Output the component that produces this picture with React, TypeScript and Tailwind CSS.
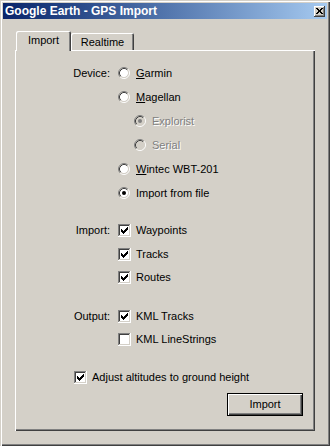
import React from "react";

// classic win2k-ish sunken radio
function Radio({ checked = false, disabled = false }: { checked?: boolean; disabled?: boolean }) {
  return (
    <svg width="12" height="12" viewBox="0 0 12 12" className="shrink-0">
      <circle cx="6" cy="6" r="4.2" fill={disabled ? "#d4d0c8" : "#ffffff"} />
      <path d="M2.11 9.89 A5.5 5.5 0 0 1 9.89 2.11" fill="none" stroke="#808080" strokeWidth="1" />
      <path d="M9.89 2.11 A5.5 5.5 0 0 1 2.11 9.89" fill="none" stroke="#ffffff" strokeWidth="1" />
      <path d="M2.82 9.18 A4.5 4.5 0 0 1 9.18 2.82" fill="none" stroke="#404040" strokeWidth="1" />
      <path d="M9.18 2.82 A4.5 4.5 0 0 1 2.82 9.18" fill="none" stroke="#d4d0c8" strokeWidth="1" />
      {checked && <circle cx="6" cy="6" r="2" fill={disabled ? "#808080" : "#000000"} />}
    </svg>
  );
}

function Checkbox({ checked = false }: { checked?: boolean }) {
  const cols = [
    [3, 5],
    [4, 6],
    [5, 7],
    [6, 6],
    [7, 5],
    [8, 4],
    [9, 3],
  ];
  return (
    <svg width="13" height="13" viewBox="0 0 13 13" shapeRendering="crispEdges" className="shrink-0">
      <rect x="0" y="0" width="13" height="13" fill="#ffffff" />
      <rect x="0" y="0" width="12" height="1" fill="#808080" />
      <rect x="0" y="0" width="1" height="12" fill="#808080" />
      <rect x="1" y="1" width="10" height="1" fill="#404040" />
      <rect x="1" y="1" width="1" height="10" fill="#404040" />
      <rect x="1" y="11" width="11" height="1" fill="#d4d0c8" />
      <rect x="11" y="1" width="1" height="11" fill="#d4d0c8" />
      {checked && cols.map(([x, y]) => <rect key={x} x={x} y={y} width="1" height="3" fill="#000000" />)}
    </svg>
  );
}

function Label({ children }: { children?: React.ReactNode }) {
  return <div className="w-[95px] text-right shrink-0">{children}</div>;
}

export default function App() {
  const disabledText = "text-[#808080] [text-shadow:1px_1px_0_#ffffff]";

  return (
    <div
      className="w-[330px] h-[446px] bg-[#d4d0c8] p-[3px] flex flex-col text-black text-[11px] leading-none shadow-[inset_1px_1px_0_#d4d0c8,inset_2px_2px_0_#ffffff,inset_-1px_-1px_0_#404040,inset_-2px_-2px_0_#808080]"
      style={{ fontFamily: '"Liberation Sans", Arial, sans-serif' }}
    >
      {/* title bar */}
      <div className="h-[16px] shrink-0 flex items-center justify-between bg-gradient-to-r from-[#0a246a] to-[#a6caf0] pl-[2px] pr-[2px]">
        <span className="text-white font-bold text-[12px] leading-none">Google Earth - GPS Import</span>
        <div className="w-[11px] h-[11px] bg-[#d4d0c8] flex items-center justify-center shadow-[inset_-1px_-1px_0_#404040,inset_1px_1px_0_#ffffff,inset_-2px_-2px_0_#808080]">
          <svg width="7" height="6" viewBox="0 0 7 6" shapeRendering="crispEdges">
            <path d="M0.5 0 L6.5 6 M6.5 0 L0.5 6" stroke="#000" strokeWidth="1.2" />
          </svg>
        </div>
      </div>

      {/* tabs */}
      <div className="mt-[12px] ml-[13px] flex items-end h-[20px]">
        <div className="relative z-[2] w-[55px] h-[20px] bg-[#d4d0c8] rounded-tl-[2px] rounded-tr-[2px] flex items-center justify-center pb-[1px] shadow-[inset_1px_1px_0_#ffffff,inset_-1px_0_0_#404040,inset_-2px_0_0_#808080]">
          Import
        </div>
        <div className="w-[63px] h-[18px] bg-[#d4d0c8] rounded-tl-[2px] rounded-tr-[2px] flex items-center justify-center pt-[1px] shadow-[inset_1px_1px_0_#ffffff,inset_-1px_0_0_#404040,inset_-2px_0_0_#808080]">
          Realtime
        </div>
      </div>

      {/* panel */}
      <div className="relative z-[1] mt-[-1px] ml-[12px] w-[300px] h-[381px] bg-[#d4d0c8] pt-[11px] flex flex-col shadow-[inset_1px_1px_0_#ffffff,inset_-1px_-1px_0_#404040,inset_-2px_-2px_0_#808080]">
        <div className="flex items-center h-[24px]">
          <Label>Device:</Label>
          <div className="ml-[8px] flex items-center gap-[6px]">
            <Radio />
            <span>
              <u className="[text-underline-offset:1px]">G</u>armin
            </span>
          </div>
        </div>
        <div className="flex items-center h-[24px]">
          <Label />
          <div className="ml-[8px] flex items-center gap-[6px]">
            <Radio />
            <span>
              <u className="[text-underline-offset:1px]">M</u>agellan
            </span>
          </div>
        </div>
        <div className="flex items-center h-[24px]">
          <Label />
          <div className="ml-[24px] flex items-center gap-[6px]">
            <Radio checked disabled />
            <span className={disabledText}>Explorist</span>
          </div>
        </div>
        <div className="flex items-center h-[24px]">
          <Label />
          <div className="ml-[24px] flex items-center gap-[6px]">
            <Radio disabled />
            <span className={disabledText}>Serial</span>
          </div>
        </div>
        <div className="flex items-center h-[24px]">
          <Label />
          <div className="ml-[8px] flex items-center gap-[6px]">
            <Radio />
            <span>
              <u className="[text-underline-offset:1px]">W</u>intec WBT-201
            </span>
          </div>
        </div>
        <div className="flex items-center h-[24px]">
          <Label />
          <div className="ml-[8px] flex items-center gap-[6px]">
            <Radio checked />
            <span>Import from file</span>
          </div>
        </div>

        <div className="mt-[14px] flex items-center h-[23.5px]">
          <Label>Import:</Label>
          <div className="ml-[8px] flex items-center gap-[5px]">
            <Checkbox checked />
            <span>Waypoints</span>
          </div>
        </div>
        <div className="flex items-center h-[23.5px]">
          <Label />
          <div className="ml-[8px] flex items-center gap-[5px]">
            <Checkbox checked />
            <span>Tracks</span>
          </div>
        </div>
        <div className="flex items-center h-[23.5px]">
          <Label />
          <div className="ml-[8px] flex items-center gap-[5px]">
            <Checkbox checked />
            <span>Routes</span>
          </div>
        </div>

        <div className="mt-[15px] flex items-center h-[23.5px]">
          <Label>Output:</Label>
          <div className="ml-[8px] flex items-center gap-[5px]">
            <Checkbox checked />
            <span>KML Tracks</span>
          </div>
        </div>
        <div className="flex items-center h-[23.5px]">
          <Label />
          <div className="ml-[8px] flex items-center gap-[5px]">
            <Checkbox />
            <span>KML LineStrings</span>
          </div>
        </div>

        <div className="mt-[14px] h-[23.5px] pl-[59px] flex items-center gap-[5px]">
          <Checkbox checked />
          <span>Adjust altitudes to ground height</span>
        </div>

        <div className="mt-[4px] flex justify-end pr-[12px]">
          <button className="w-[76px] h-[23px] bg-[#d4d0c8] border border-black flex items-center justify-center shadow-[inset_1px_1px_0_#ffffff,inset_-1px_-1px_0_#404040,inset_-2px_-2px_0_#808080]">
            Import
          </button>
        </div>
      </div>
    </div>
  );
}
